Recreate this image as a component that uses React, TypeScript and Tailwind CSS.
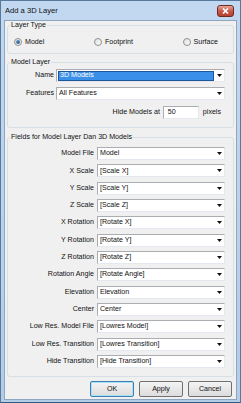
import React from "react";

const FONT = { fontFamily: '"Liberation Sans", Arial, sans-serif' };

const FIELDS: [string, string][] = [
  ["Model File", "Model"],
  ["X Scale", "[Scale X]"],
  ["Y Scale", "[Scale Y]"],
  ["Z Scale", "[Scale Z]"],
  ["X Rotation", "[Rotate X]"],
  ["Y Rotation", "[Rotate Y]"],
  ["Z Rotation", "[Rotate Z]"],
  ["Rotation Angle", "[Rotate Angle]"],
  ["Elevation", "Elevation"],
  ["Center", "Center"],
  ["Low Res. Model File", "[Lowres Model]"],
  ["Low Res. Transition", "[Lowres Transition]"],
  ["Hide Transition", "[Hide Transition]"],
];

function Arrow() {
  return (
    <svg width="5" height="3" viewBox="0 0 5 3" className="shrink-0">
      <path d="M0 0h5L2.5 3z" fill="#111" />
    </svg>
  );
}

function Combo({ value, selected }: { value: string; selected?: boolean }) {
  return (
    <div className="flex h-[13px] min-w-0 flex-1 items-center gap-[3px] border border-[#abadb3] border-r-[#e3e9ef] border-b-[#e3e9ef] bg-white pl-[1px] pr-[2px]">
      {selected ? (
        <span className="flex h-[10px] flex-1 items-center border border-[#1d5799] bg-[#3a8fe8] pl-px text-white">
          {value}
        </span>
      ) : (
        <span className="flex-1 truncate pl-px">{value}</span>
      )}
      <Arrow />
    </div>
  );
}

function Radio({ label, checked }: { label: string; checked?: boolean }) {
  return (
    <label className="flex items-center gap-[3px]">
      <span className="flex h-[8px] w-[8px] items-center justify-center rounded-full border border-[#8e8f8f] bg-gradient-to-br from-[#e2e2e2] to-[#fafafa]">
        {checked && <span className="h-[4px] w-[4px] rounded-full bg-gradient-to-br from-[#6a9ccc] to-[#1d4d80]" />}
      </span>
      <span>{label}</span>
    </label>
  );
}

function Group({ title, className, children }: { title: string; className: string; children: React.ReactNode }) {
  return (
    <div className={`relative rounded-[3px] border border-[#d5dfe5] ${className}`}>
      <span className="absolute -top-[5px] left-[2px] bg-[#f0f0f0] px-[1px] leading-[9px]">{title}</span>
      {children}
    </div>
  );
}

function Button({ label, primary }: { label: string; primary?: boolean }) {
  return (
    <button
      className={`h-[16px] w-[44px] rounded-[2px] border bg-gradient-to-b from-[#f4f4f4] to-[#dcdcdc] ${
        primary ? "border-[#3c7fb1] shadow-[inset_0_0_0_1px_#a8e0f8]" : "border-[#707070]"
      }`}
    >
      {label}
    </button>
  );
}

export default function App() {
  return (
    <div
      style={FONT}
      className="flex h-[403px] w-[241px] flex-col border border-[#56799c] border-b-[#2f5f80] bg-gradient-to-b from-[#c2d8f0] to-[#b3cce8] text-[7.1px] text-[#111]"
    >
      <div className="flex h-[19px] items-center justify-between pl-[4px] pr-[6px]">
        <span className="pt-[1px] text-[7.6px]">Add a 3D Layer</span>
        <span className="flex h-[12px] w-[17px] items-center justify-center rounded-[3px] border border-[#6f2a21] bg-gradient-to-b from-[#e5a697] via-[#c9564a] to-[#b8402e]">
          <svg width="7" height="6" viewBox="0 0 7 6">
            <path d="M1 0.5l5 5M6 0.5l-5 5" stroke="#fff" strokeWidth="1.6" />
          </svg>
        </span>
      </div>

      <div className="mx-[3px] mb-[2px] flex flex-1 flex-col border border-[#8ea6c2] bg-[#f0f0f0] px-[2px] pt-[4px]">
        <Group title="Layer Type" className="h-[29px] pt-[11px]">
          <div className="flex h-[10px] items-center justify-between pl-[6px] pr-[15px]">
            <Radio label="Model" checked />
            <Radio label="Footprint" />
            <Radio label="Surface" />
          </div>
        </Group>

        <Group title="Model Layer" className="mt-[8px] h-[66px] pt-[6px]">
          <div className="flex flex-col gap-[5px] pr-[8px]">
            <div className="flex items-center gap-[2px]">
              <span className="w-[46px] text-right">Name</span>
              <Combo value="3D Models" selected />
            </div>
            <div className="flex items-center gap-[2px]">
              <span className="w-[46px] text-right">Features</span>
              <Combo value="All Features" />
            </div>
            <div className="mt-px flex items-center justify-end gap-[3px] pr-[4px]">
              <span>Hide Models at</span>
              <div className="flex h-[13px] w-[36px] items-center border border-[#abadb3] border-r-[#e3e9ef] border-b-[#e3e9ef] bg-white pl-[4px]">
                50
              </div>
              <span className="ml-[1px]">pixels</span>
            </div>
          </div>
        </Group>

        <Group title="Fields for Model Layer Dan 3D Models" className="mt-[9px] h-[240px] pt-[9px]">
          <div className="flex flex-col gap-[4.33px] pr-[8px]">
            {FIELDS.map(([label, value]) => (
              <div key={label} className="flex items-center gap-[3px]">
                <span className="w-[86px] text-right whitespace-nowrap">{label}</span>
                <Combo value={value} />
              </div>
            ))}
          </div>
        </Group>

        <div className="mt-[4px] flex justify-end gap-[5px] pr-[2px]">
          <Button label="OK" primary />
          <Button label="Apply" />
          <Button label="Cancel" />
        </div>
      </div>
    </div>
  );
}
